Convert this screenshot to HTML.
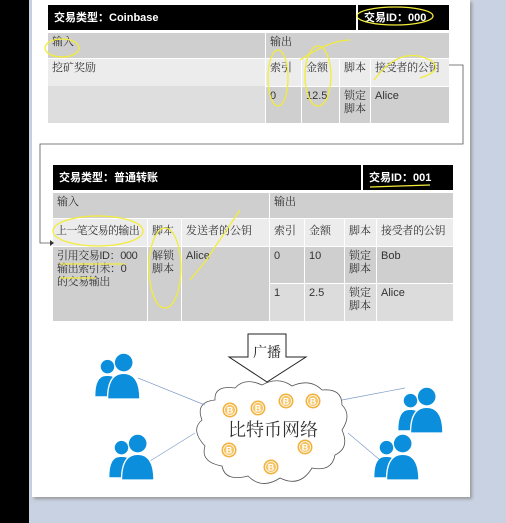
<!DOCTYPE html>
<html><head><meta charset="utf-8"><style>
*{margin:0;padding:0;box-sizing:border-box}
body{width:506px;height:523px;overflow:hidden;background:#c9d2e2;position:relative;font-family:"Liberation Sans","Noto Sans CJK SC",sans-serif;color:#222}
.a{position:absolute}
.c{position:absolute;font-size:11px;padding:3px 4px;line-height:13px;font-family:"Liberation Sans","Noto Serif CJK SC",serif;color:#333}
.h{background:#000;color:#fff;font-weight:bold;font-size:11px;padding:7px 6px;font-family:"Liberation Sans","Noto Sans CJK SC",sans-serif}
.g{background:#cfcfcf}.l{background:#ececec}.w{background:#dcdcdc}
</style></head><body>
<div class="a" style="left:0;top:0;width:29px;height:523px;background:#000"></div>
<div class="a" style="left:32px;top:0;width:438px;height:497px;background:#fff;box-shadow:2px 2px 3px #999"></div>

<!-- table 1 -->
<div class="c h" style="left:48px;top:5px;width:308px;height:25px">交易类型：Coinbase</div>
<div class="c h" style="left:358px;top:5px;width:91px;height:25px">交易ID：000</div>
<div class="c g" style="left:48px;top:33px;width:217px;height:25px">输入</div>
<div class="c g" style="left:266px;top:33px;width:183px;height:25px">输出</div>
<div class="c l" style="left:48px;top:59px;width:217px;height:64px;background:linear-gradient(#ececec 0 27px,#dedede 27px)">挖矿奖励</div>
<div class="c l" style="left:266px;top:59px;width:35px;height:27px">索引</div>
<div class="c l" style="left:302px;top:59px;width:37px;height:27px">金额</div>
<div class="c l" style="left:340px;top:59px;width:30px;height:27px">脚本</div>
<div class="c l" style="left:371px;top:59px;width:78px;height:27px;letter-spacing:-0.3px">接受者的公钥</div>
<div class="c g" style="left:266px;top:87px;width:35px;height:36px">0</div>
<div class="c g" style="left:302px;top:87px;width:37px;height:36px">12.5</div>
<div class="c g" style="left:340px;top:87px;width:30px;height:36px">锁定脚本</div>
<div class="c g" style="left:371px;top:87px;width:78px;height:36px">Alice</div>

<!-- table 2 -->
<div class="c h" style="left:53px;top:165px;width:308px;height:25px">交易类型：普通转账</div>
<div class="c h" style="left:363px;top:165px;width:90px;height:25px">交易ID：001</div>
<div class="c g" style="left:53px;top:193px;width:216px;height:25px">输入</div>
<div class="c g" style="left:270px;top:193px;width:183px;height:25px">输出</div>
<div class="c l" style="left:53px;top:219px;width:94px;height:27px;padding:6px 2px 0 3px;letter-spacing:-0.6px;white-space:nowrap">上一笔交易的输出</div>
<div class="c l" style="left:148px;top:219px;width:33px;height:27px;padding-top:6px">脚本</div>
<div class="c l" style="left:182px;top:219px;width:87px;height:27px;padding-top:6px">发送者的公钥</div>
<div class="c l" style="left:270px;top:219px;width:34px;height:27px;padding-top:6px">索引</div>
<div class="c l" style="left:305px;top:219px;width:39px;height:27px;padding-top:6px">金额</div>
<div class="c l" style="left:345px;top:219px;width:31px;height:27px;padding-top:6px">脚本</div>
<div class="c l" style="left:377px;top:219px;width:76px;height:27px;padding-top:6px;letter-spacing:-0.3px">接受者的公钥</div>
<div class="c g" style="left:53px;top:247px;width:94px;height:74px;padding:3px 2px 0 4px;letter-spacing:-0.4px">引用交易ID：000<br>输出索引未：0<br>的交易输出</div>
<div class="c g" style="left:148px;top:247px;width:33px;height:74px">解锁脚本</div>
<div class="c g" style="left:182px;top:247px;width:87px;height:74px">Alice</div>
<div class="c g" style="left:270px;top:247px;width:34px;height:36px">0</div>
<div class="c g" style="left:305px;top:247px;width:39px;height:36px">10</div>
<div class="c g" style="left:345px;top:247px;width:31px;height:36px">锁定脚本</div>
<div class="c g" style="left:377px;top:247px;width:76px;height:36px">Bob</div>
<div class="c w" style="left:270px;top:284px;width:34px;height:37px">1</div>
<div class="c w" style="left:305px;top:284px;width:39px;height:37px">2.5</div>
<div class="c w" style="left:345px;top:284px;width:31px;height:37px">锁定脚本</div>
<div class="c w" style="left:377px;top:284px;width:76px;height:37px">Alice</div>

<svg class="a" style="left:0;top:0" width="506" height="523">
<defs>
<g id="p"><circle cx="-10" cy="-4" r="5" fill="#0b8fdc"/><path d="M-19 18 Q-19 2 -10 3 Q-1 2 -1 18Z" fill="#0b8fdc"/>
<circle cx="2" cy="-7" r="7" fill="#0b8fdc" stroke="#fff" stroke-width="1"/><path d="M-10 20 Q-10 1 2 1 Q14 1 14 20Z" fill="#0b8fdc" stroke="#fff" stroke-width="1"/></g>
<g id="b"><circle r="7.5" fill="#f3b13c"/><circle r="5.5" fill="#f7c566" stroke="#fff" stroke-width="0.8"/><text x="0" y="3.5" font-size="9" font-weight="bold" fill="#fff" text-anchor="middle" font-family="Liberation Sans">B</text></g>
</defs>
<polyline points="449,65 463,65 463,144 40,144 40,243 50,243" fill="none" stroke="#555" stroke-width="0.8"/>
<path d="M50 240 L54 243 L50 246Z" fill="#333"/>
<path d="M248 334 H286 V357 H306 L267 382 L229 357 H248Z" fill="#fff" stroke="#222" stroke-width="1"/>
<text x="267" y="357" font-size="14" text-anchor="middle" fill="#222" font-family="Liberation Sans,Noto Serif CJK SC">广播</text>
<path d="M215 400 Q214 385 235 388 Q245 377 262 385 Q278 376 292 386 Q310 378 322 390 Q342 388 342 405 Q352 415 342 430 Q350 448 335 455 Q332 472 312 468 Q300 488 280 478 Q262 490 248 476 Q225 482 222 466 Q200 462 205 446 Q190 430 202 420 Q195 402 215 400Z" fill="#fff" stroke="#555" stroke-width="0.8"/>
<g fill="none" stroke="#7f9cc8" stroke-width="0.7">
<line x1="138" y1="378" x2="205" y2="405"/><line x1="150" y1="461" x2="195" y2="433"/>
<line x1="342" y1="400" x2="405" y2="388"/><line x1="348" y1="433" x2="380" y2="460"/></g>
<use href="#b" x="230" y="410"/><use href="#b" x="258" y="408"/><use href="#b" x="286" y="401"/><use href="#b" x="313" y="401"/>
<use href="#b" x="229" y="450"/><use href="#b" x="305" y="447"/><use href="#b" x="271" y="467"/>
<text x="273" y="436" font-size="18" text-anchor="middle" fill="#333" font-family="Liberation Sans,Noto Serif CJK SC">比特币网络</text>
<g transform="translate(121,372) scale(1.35)"><use href="#p"/></g>
<g transform="translate(135,453) scale(1.35)"><use href="#p"/></g>
<g transform="translate(424,406) scale(1.35)"><use href="#p"/></g>
<g transform="translate(400,453) scale(1.35)"><use href="#p"/></g>
<g fill="none" stroke="#f2ec3a" stroke-width="1.3">
<ellipse cx="62" cy="48" rx="17" ry="9"/><ellipse cx="395" cy="16" rx="38" ry="9"/>
<ellipse cx="278" cy="78" rx="10" ry="28"/><ellipse cx="318" cy="76" rx="13" ry="30"/>
<path d="M300 60 Q330 40 350 40"/><path d="M374 80 Q400 45 430 60 Q445 70 420 78"/>
<ellipse cx="98" cy="231" rx="45" ry="15"/><ellipse cx="165" cy="268" rx="16" ry="40"/>
<path d="M190 280 L205 262 L240 210"/><line x1="370" y1="187" x2="430" y2="185"/>
<line x1="60" y1="264" x2="125" y2="264"/><line x1="60" y1="278" x2="95" y2="278"/>
</g>
</svg>
</body></html>
